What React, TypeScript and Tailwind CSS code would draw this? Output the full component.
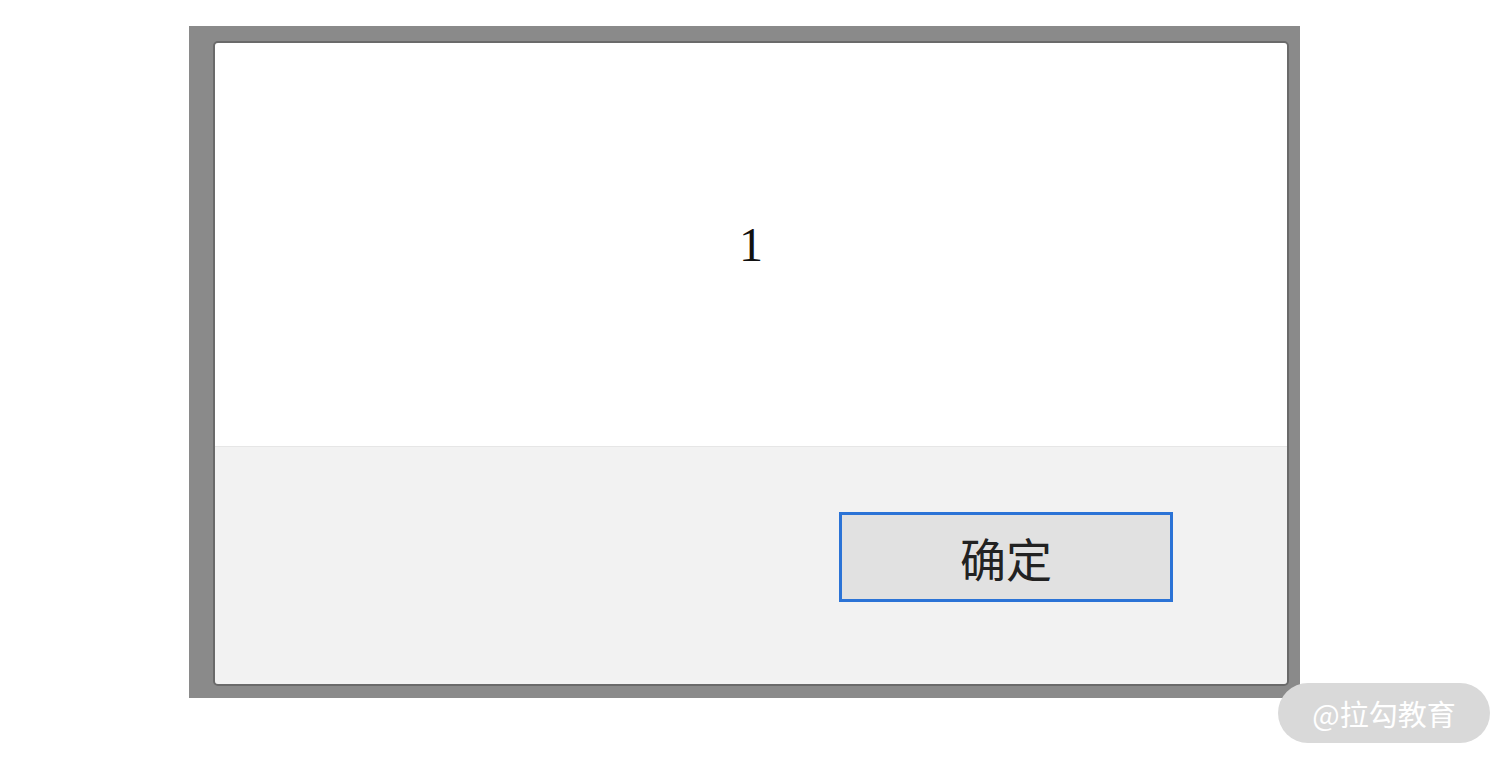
export default function App() {
  return (
    <div className="relative w-[1511px] h-[764px] bg-white overflow-hidden" style={{ fontFamily: '"Liberation Serif", "Noto Sans CJK SC", serif' }}>
      <div className="pl-[189px] pt-[26px]">
        <div className="w-[1111px] h-[672px] bg-[#8a8a8a] pl-[24px] pt-[15px]">
          <div className="w-[1076px] h-[645px] border-2 border-[#6a6a6a] rounded-[5px] overflow-hidden flex flex-col">
            <div className="h-[404px] bg-white flex items-center justify-center border-b border-[#e6e6e6]">
              <span className="text-[48px] leading-none text-[#111]" style={{ fontFamily: '"Liberation Serif", serif' }}>1</span>
            </div>
            <div className="flex-1 bg-[#f2f2f2] flex justify-end pr-[114px] pt-[65px]">
              <div className="w-[334px] h-[90px] border-[3px] border-[#2b73d6] bg-[#e1e1e1] flex items-center justify-center">
                <span className="text-[46px] leading-none text-[#222]" style={{ fontFamily: '"Noto Sans CJK SC", sans-serif' }}>确定</span>
              </div>
            </div>
          </div>
        </div>
      </div>
      <div className="absolute left-[1278px] top-[683px] w-[212px] h-[60px] rounded-full bg-[#d9d9d9] flex items-center justify-center">
        <span className="text-[29px] leading-none text-white" style={{ fontFamily: '"Noto Sans CJK SC", sans-serif' }}>@拉勾教育</span>
      </div>
    </div>
  );
}
